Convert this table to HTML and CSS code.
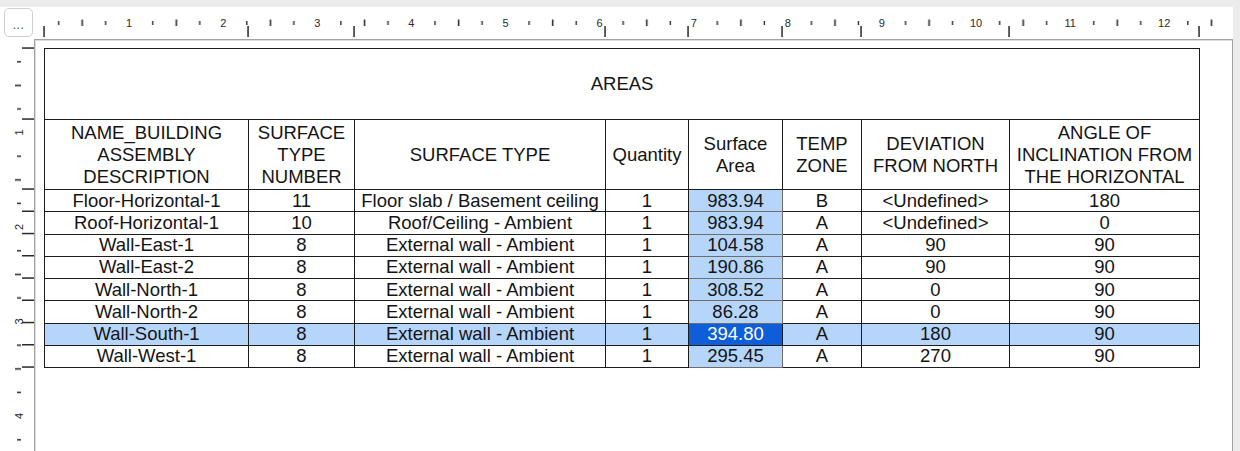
FILE: index.html
```html
<!DOCTYPE html>
<html>
<head>
<meta charset="utf-8">
<link rel="stylesheet" href="styles.css">
</head>
<body>
<div class="window">
  <div class="corner"><div class="more"><span class="dots">...</span></div></div>
  <div class="hruler">
    <svg class="ruler-svg" width="1199" height="32" viewBox="0 0 1199 32">
      <defs>
        <pattern id="ht" patternUnits="userSpaceOnUse" x="1" y="0" width="94.1" height="32">
          <rect x="22.9" y="14" width="1.4" height="4" fill="#2e2e2e"/>
          <rect x="46.4" y="12.5" width="1.6" height="6.5" fill="#2e2e2e"/>
          <rect x="70" y="14" width="1.4" height="4" fill="#2e2e2e"/>
        </pattern>
      </defs>
      <rect x="0" y="0" width="1199" height="32" fill="url(#ht)"/>
      <g class="rnum" text-anchor="middle">
        <text x="95.1" y="20">1</text>
        <text x="189.2" y="20">2</text>
        <text x="283.3" y="20">3</text>
        <text x="377.4" y="20">4</text>
        <text x="471.5" y="20">5</text>
        <text x="565.6" y="20">6</text>
        <text x="659.7" y="20">7</text>
        <text x="753.8" y="20">8</text>
        <text x="847.9" y="20">9</text>
        <text x="942" y="20">10</text>
        <text x="1036.1" y="20">11</text>
        <text x="1130.2" y="20">12</text>
      </g>
      <g fill="#2a2a2a">
        <rect x="9.3" y="19" width="1.5" height="11"/>
        <rect x="213.3" y="19" width="1.5" height="11"/>
        <rect x="319.3" y="19" width="1.5" height="11"/>
        <rect x="570.3" y="19" width="1.5" height="11"/>
        <rect x="653.3" y="19" width="1.5" height="11"/>
        <rect x="747.3" y="19" width="1.5" height="11"/>
        <rect x="826.3" y="19" width="1.5" height="11"/>
        <rect x="974.3" y="19" width="1.5" height="11"/>
        <rect x="1164.3" y="19" width="1.5" height="11"/>
      </g>
    </svg>
  </div>
  <div class="strip"></div>
  <div class="vruler">
    <svg class="ruler-svg" width="34" height="412" viewBox="0 0 34 412">
      <defs>
        <pattern id="vt" patternUnits="userSpaceOnUse" x="0" y="-1" width="34" height="94.5">
          <rect x="17" y="23" width="4" height="1.5" fill="#2e2e2e"/>
          <rect x="15" y="46.6" width="6" height="1.6" fill="#2e2e2e"/>
          <rect x="17" y="70.2" width="4" height="1.5" fill="#2e2e2e"/>
        </pattern>
      </defs>
      <rect x="0" y="0" width="34" height="412" fill="url(#vt)"/>
      <g class="rnum" text-anchor="middle">
        <text x="0" y="0" transform="translate(23 93.5) rotate(-90)">1</text>
        <text x="0" y="0" transform="translate(23 188) rotate(-90)">2</text>
        <text x="0" y="0" transform="translate(23 282.5) rotate(-90)">3</text>
        <text x="0" y="0" transform="translate(23 377) rotate(-90)">4</text>
      </g>
      <g fill="#2a2a2a">
        <rect x="22" y="8.3" width="12" height="1.5"/>
        <rect x="22" y="79.3" width="12" height="1.5"/>
        <rect x="22" y="149.3" width="12" height="1.5"/>
        <rect x="22" y="171.5" width="12" height="1.5"/>
        <rect x="22" y="193.8" width="12" height="1.5"/>
        <rect x="22" y="216" width="12" height="1.5"/>
        <rect x="22" y="238.3" width="12" height="1.5"/>
        <rect x="22" y="260.5" width="12" height="1.5"/>
        <rect x="22" y="282.8" width="12" height="1.5"/>
        <rect x="22" y="305" width="12" height="1.5"/>
        <rect x="22" y="327.3" width="12" height="1.5"/>
      </g>
    </svg>
  </div>
  <div class="page">
    <table class="areas">
      <colgroup>
        <col class="c1"><col class="c2"><col class="c3"><col class="c4">
        <col class="c5"><col class="c6"><col class="c7"><col class="c8">
      </colgroup>
      <tr class="title-row"><td colspan="8">AREAS</td></tr>
      <tr class="head-row">
        <td>NAME_BUILDING<br>ASSEMBLY<br>DESCRIPTION</td>
        <td>SURFACE<br>TYPE<br>NUMBER</td>
        <td>SURFACE TYPE</td>
        <td>Quantity</td>
        <td>Surface<br>Area</td>
        <td>TEMP<br>ZONE</td>
        <td>DEVIATION<br>FROM NORTH</td>
        <td>ANGLE OF<br>INCLINATION FROM<br>THE HORIZONTAL</td>
      </tr>
      <tr class="row"><td>Floor-Horizontal-1</td><td>11</td><td>Floor slab / Basement ceiling</td><td>1</td><td class="area">983.94</td><td>B</td><td>&lt;Undefined&gt;</td><td>180</td></tr>
      <tr class="row"><td>Roof-Horizontal-1</td><td>10</td><td>Roof/Ceiling - Ambient</td><td>1</td><td class="area">983.94</td><td>A</td><td>&lt;Undefined&gt;</td><td>0</td></tr>
      <tr class="row"><td>Wall-East-1</td><td>8</td><td>External wall - Ambient</td><td>1</td><td class="area">104.58</td><td>A</td><td>90</td><td>90</td></tr>
      <tr class="row"><td>Wall-East-2</td><td>8</td><td>External wall - Ambient</td><td>1</td><td class="area">190.86</td><td>A</td><td>90</td><td>90</td></tr>
      <tr class="row"><td>Wall-North-1</td><td>8</td><td>External wall - Ambient</td><td>1</td><td class="area">308.52</td><td>A</td><td>0</td><td>90</td></tr>
      <tr class="row"><td>Wall-North-2</td><td>8</td><td>External wall - Ambient</td><td>1</td><td class="area">86.28</td><td>A</td><td>0</td><td>90</td></tr>
      <tr class="row selected"><td>Wall-South-1</td><td>8</td><td>External wall - Ambient</td><td>1</td><td class="area current">394.80</td><td>A</td><td>180</td><td>90</td></tr>
      <tr class="row"><td>Wall-West-1</td><td>8</td><td>External wall - Ambient</td><td>1</td><td class="area">295.45</td><td>A</td><td>270</td><td>90</td></tr>
    </table>
  </div>
  <div class="strip"></div>
</div>
</body>
</html>
```

FILE: styles.css
```css
* { box-sizing: border-box; }

html, body {
  margin: 0;
  padding: 0;
  background: #ececec;
  height: 451px;
  overflow: hidden;
}

.window {
  display: grid;
  grid-template-columns: 34px 1199px 7px;
  grid-template-rows: 39px 412px;
  font-family: "Liberation Sans", Arial, sans-serif;
}

.corner {
  margin-top: 7px;
  background: #fff;
  padding: 1px 0 0 4px;
}

.more {
  display: flex;
  justify-content: center;
  width: 29px;
  height: 29px;
  border: 1px solid #cfcfcf;
  border-radius: 5px;
  background: #fff;
}

.dots {
  display: block;
  margin-top: 10px;
  color: #444;
  font-size: 12px;
  line-height: 12px;
  letter-spacing: 0.5px;
}

.hruler {
  margin-top: 7px;
  background: #fff;
}

.ruler-svg { display: block; }

.rnum {
  font-family: "Liberation Sans", Arial, sans-serif;
  font-size: 11px;
  fill: #2a2a2a;
}

.strip { background: #ececec; }

.vruler {
  background: #fff;
}

.page {
  background: #fff;
  border-left: 1px solid #a3a3a3;
  border-top: 1px solid #a3a3a3;
  border-right: 1px solid #a3a3a3;
  box-shadow: inset 1px 1px 0 #dcdcdc;
  padding: 8px 0 0 9px;
}

.areas {
  border-collapse: collapse;
  table-layout: fixed;
  width: 1155px;
  font-size: 18.5px;
  line-height: 22px;
  color: #141414;
  text-align: center;
}

.c1 { width: 204px; }
.c2 { width: 106px; }
.c3 { width: 251px; }
.c4 { width: 83px; }
.c5 { width: 94px; }
.c6 { width: 79px; }
.c7 { width: 148px; }
.c8 { width: 190px; }

.areas td {
  border: 1px solid #1c1c1c;
  padding: 0;
  vertical-align: middle;
  white-space: nowrap;
}

.title-row { height: 71px; }
.head-row { height: 70px; }
.row { height: 22.25px; }
.row td { line-height: 20px; }

.areas td.area {
  background: #b5d5fb;
  border-color: #6d6d6d;
}

.selected td { background: #b5d5fb; }

.areas td.current {
  background: #0d5ed8;
  color: #fff;
  border-color: #1c1c1c;
}
```
